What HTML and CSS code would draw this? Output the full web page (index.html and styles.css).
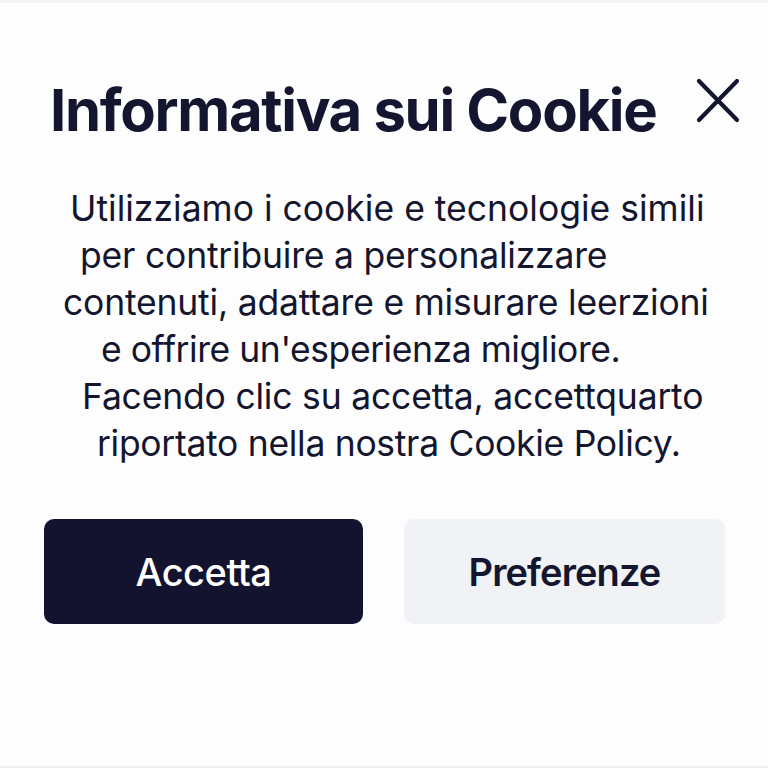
FILE: index.html
```html
<!DOCTYPE html>
<html lang="it">
<head>
<meta charset="utf-8">
<title>Informativa sui Cookie</title>
<link rel="stylesheet" href="styles.css">
</head>
<body>
<div class="page">
  <div class="dialog">
    <div class="header">
      <h1 class="title">Informativa sui Cookie</h1>
      <button class="close" aria-label="Chiudi">
        <svg width="44" height="45" viewBox="0 0 44 45"><path d="M3 3 L41 42 M41 3 L3 42" stroke="#14152f" stroke-width="4.2" stroke-linecap="round" fill="none"/></svg>
      </button>
    </div>
    <div class="body">
      <span class="line l1">Utilizziamo i cookie e tecnologie simili</span>
      <span class="line l2">per contribuire a personalizzare</span>
      <span class="line l3">contenuti, adattare e misurare leerzioni</span>
      <span class="line l4">e offrire un'esperienza migliore.</span>
      <span class="line l5">Facendo clic su accetta, accettquarto</span>
      <span class="line l6">riportato nella nostra Cookie Policy.</span>
    </div>
    <div class="actions">
      <button class="btn btn-primary">Accetta</button>
      <button class="btn btn-secondary">Preferenze</button>
    </div>
  </div>
</div>
</body>
</html>
```
FILE: styles.css
```css
* { box-sizing: border-box; }
html, body { margin: 0; padding: 0; }
body {
  background: #fdfdfd;
  font-family: "Inter", "Roboto", sans-serif;
  color: #14152f;
}
.page {
  width: 768px;
  height: 768px;
  border-top: 3px solid #f1f3f6;
  border-bottom: 2px solid #eef1f5;
}
.dialog {
  padding: 66px 28px 0 44px;
  display: flex;
  flex-direction: column;
}
.header {
  display: flex;
  justify-content: space-between;
  align-items: flex-start;
}
.title {
  margin: 6px 0 0 6px;
  font-size: 58px;
  font-weight: 700;
  line-height: 70px;
  letter-spacing: -1.3px;
}
.close {
  background: none;
  border: 0;
  padding: 0;
  margin-top: 9px;
  width: 44px;
  height: 45px;
}
.close svg { display: block; }
.body {
  margin-top: 40px;
  display: flex;
  flex-direction: column;
  align-items: flex-start;
  font-size: 35.5px;
  line-height: 47px;
  font-weight: 400;
}
.line { display: block; white-space: nowrap; letter-spacing: -0.2px; }
.l1 { margin-left: 26px; letter-spacing: 0; }
.l2 { margin-left: 36px; }
.l3 { margin-left: 19px; }
.l4 { margin-left: 57px; letter-spacing: -0.45px; }
.l5 { margin-left: 38px; }
.l6 { margin-left: 53px; letter-spacing: -0.3px; }
.actions {
  margin-top: 52px;
  display: flex;
  gap: 41px;
}
.btn {
  width: 319px;
  height: 105px;
  border: 0;
  border-radius: 10px;
  font-family: "Inter", "Roboto", sans-serif;
  font-size: 38px;
  letter-spacing: -0.5px;
}
.btn-primary { background: #13132f; color: #ffffff; font-weight: 500; }
.btn-secondary { background: #f1f2f5; color: #14152f; width: 321px; font-weight: 600; letter-spacing: -0.9px; }
```
